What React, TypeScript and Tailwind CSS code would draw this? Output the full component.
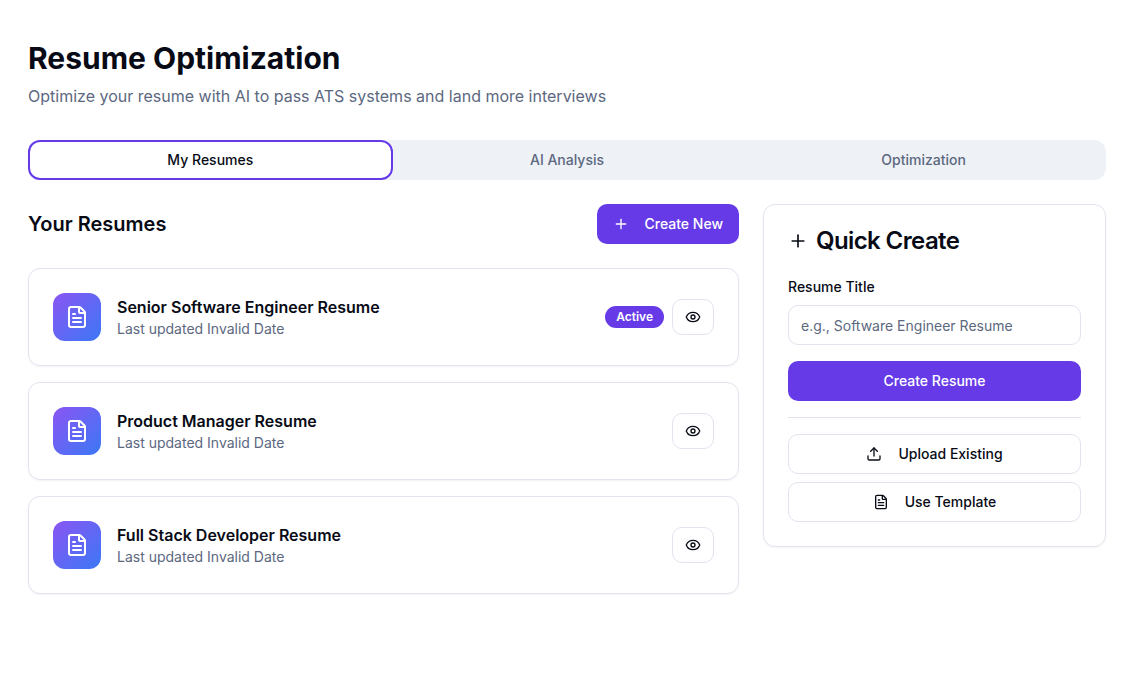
import React from 'react';
import { Eye, FileText, Plus, Upload } from 'lucide-react';

const resumes = [
  { title: 'Senior Software Engineer Resume', active: true },
  { title: 'Product Manager Resume', active: false },
  { title: 'Full Stack Developer Resume', active: false },
];

const tabs = ['My Resumes', 'AI Analysis', 'Optimization'];

export default function App() {
  return (
    <main className="min-h-screen bg-white py-10 pr-[27px] pl-7 font-[Inter,sans-serif] text-[#080b16] antialiased">
      <header>
        <h1 className="text-3xl font-bold">Resume Optimization</h1>
        <p className="mt-2 text-[#5c6880]">Optimize your resume with AI to pass ATS systems and land more interviews</p>
      </header>

      <div role="tablist" className="mt-8 grid h-10 grid-cols-3 rounded-xl bg-[#eef1f6] p-1">
        {tabs.map((tab, i) => (
          <button
            key={tab}
            type="button"
            role="tab"
            aria-selected={i === 0}
            className={
              i === 0
                ? '-m-1 rounded-xl border-2 border-[#663be7] bg-white text-sm font-medium'
                : 'text-sm font-medium text-[#5c6880]'
            }
          >
            {tab}
          </button>
        ))}
      </div>

      <div className="mt-6 grid grid-cols-[minmax(0,711fr)_minmax(0,343fr)] items-start gap-6">
        <section>
          <div className="flex items-center justify-between">
            <h2 className="text-xl font-semibold">Your Resumes</h2>
            <button type="button" className="flex h-10 items-center rounded-[10px] bg-[#663be7] px-4 text-sm font-medium text-white">
              <Plus size={16} className="mr-4" />
              Create New
            </button>
          </div>
          <ul className="mt-6 space-y-4">
            {resumes.map((resume) => (
              <li key={resume.title} className="flex items-center justify-between rounded-xl border border-[#e1e4ef] p-6 shadow-xs">
                <div className="flex items-center gap-4">
                  <div className="flex size-12 items-center justify-center rounded-xl bg-[linear-gradient(to_bottom_right,#8b55f3,#3b78f5)] text-white">
                    <FileText size={24} />
                  </div>
                  <div>
                    <h3 className="font-semibold">{resume.title}</h3>
                    <p className="text-sm text-[#5c6880]">Last updated Invalid Date</p>
                  </div>
                </div>
                <div className="flex items-center gap-2">
                  {resume.active && (
                    <span className="rounded-full bg-[#663be7] px-[11px] py-[3px] text-xs font-semibold text-white">Active</span>
                  )}
                  <button type="button" aria-label={`View ${resume.title}`} className="flex h-9 w-[42px] items-center justify-center rounded-[10px] border border-[#e1e4ef]">
                    <Eye size={16} />
                  </button>
                </div>
              </li>
            ))}
          </ul>
        </section>

        <aside className="rounded-xl border border-[#e1e4ef] p-6 shadow-xs">
          <h2 className="flex items-center gap-2 text-2xl leading-6 font-semibold tracking-tight">
            <Plus size={20} />
            Quick Create
          </h2>
          <form onSubmit={(e) => e.preventDefault()}>
            <label htmlFor="title" className="mt-6 block text-sm font-medium">Resume Title</label>
            <input id="title" type="text" placeholder="e.g., Software Engineer Resume" className="mt-2 h-10 w-full rounded-[10px] border border-[#e1e4ef] px-3 text-sm placeholder:text-[#5c6880]" />
            <button type="submit" className="mt-4 h-10 w-full rounded-[10px] bg-[#663be7] text-sm font-medium text-white">Create Resume</button>
          </form>
          <div className="mt-4 space-y-2 border-t border-[#e1e4ef] pt-4">
            <button type="button" className="flex h-10 w-full items-center justify-center gap-4 rounded-[10px] border border-[#e1e4ef] text-sm font-medium">
              <Upload size={16} />
              Upload Existing
            </button>
            <button type="button" className="flex h-10 w-full items-center justify-center gap-4 rounded-[10px] border border-[#e1e4ef] text-sm font-medium">
              <FileText size={16} />
              Use Template
            </button>
          </div>
        </aside>
      </div>
    </main>
  );
}
